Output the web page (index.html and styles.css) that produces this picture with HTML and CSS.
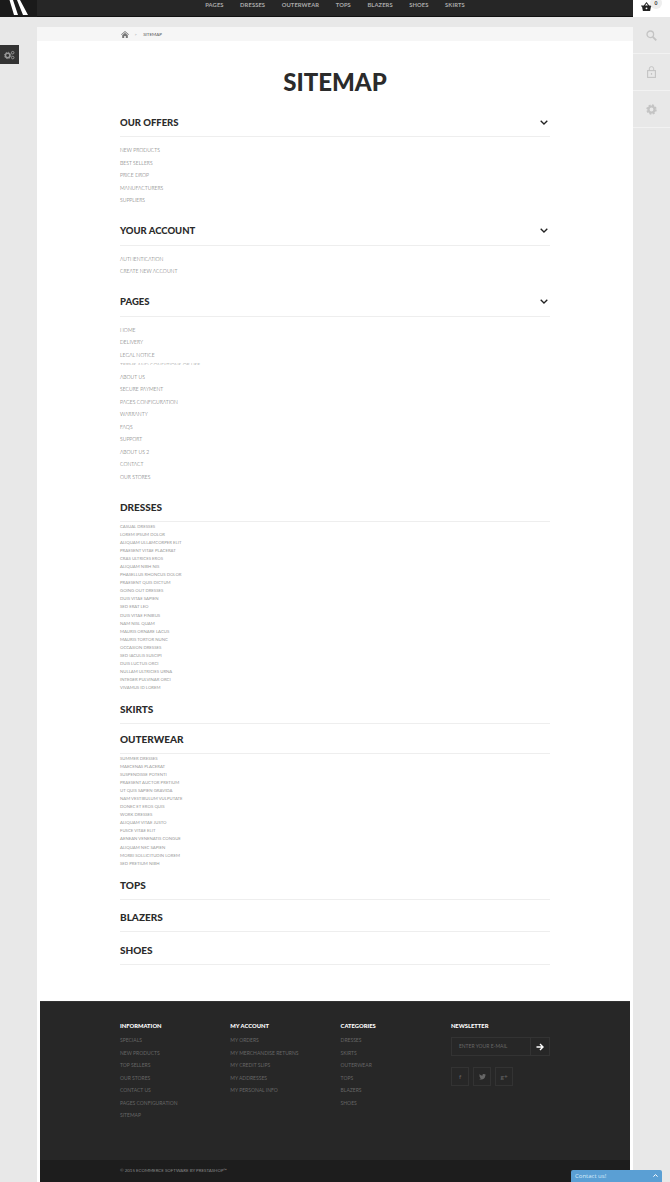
FILE: index.html
```html
<!DOCTYPE html>
<html>
  <head>
    <title>Sitemap</title>
    <link rel="stylesheet" href="styles.css">
  </head>
  <body>
    <div class="topbar">
      <a class="logo">
        <svg width="37" height="17" viewBox="0 0 37 17"><path d="M9.500 0H13l5 15h-4zM17 0h3l8 15h-5z" fill="#fff"/></svg>
      </a>
      <ul class="menu">
        <li>Pages</li>
        <li>Dresses</li>
        <li>Outerwear</li>
        <li>Tops</li>
        <li>Blazers</li>
        <li>Shoes</li>
        <li>Skirts</li>
      </ul>
      <div class="cart">
        <svg width="11" height="9" viewBox="0 0 12 10"><path d="M0 4h12v1h-1l-1 5H2L1 5H0zM3 4l3-4 3 4H7.600L6 1.800 4.400 4z" fill="#222"/><circle cx="6" cy="7" r="1" fill="#fff"/></svg>
        <span class="cart-count">0</span>
      </div>
    </div>

    <div class="layout">
      <div class="left-side">
        <div class="cogs">
          <svg width="11" height="10" viewBox="0 0 12 10" fill="none" stroke="#999"><circle cx="4" cy="5.500" r="2.400" stroke-width="1.600"/><circle cx="4" cy="5.500" r="3.500" stroke-width="1" stroke-dasharray="1.400 1.350"/><circle cx="9.500" cy="2.500" r="1.400"/><circle cx="9.500" cy="7.800" r="1.400"/></svg>
        </div>
      </div>

      <div class="main">
        <div class="breadcrumb">
          <svg width="8" height="7" viewBox="0 0 8 7"><path d="M4 0l4 3.600-.5.500L4 1 .5 4.100 0 3.600zM1.200 4.200L4 1.800l2.800 2.400V7H4.800V5H3.200v2h-2z" fill="#777"/></svg>
          <span class="sep">&gt;</span>
          <span>Sitemap</span>
        </div>

        <div class="content">
          <h1 class="page-title">Sitemap</h1>

          <div class="box">
            <h2 class="box-title">Our offers <svg class="chevron" viewBox="0 0 8 5"><path d="M.7.7L4 4 7.300.7" fill="none" stroke="#222" stroke-width="1.300"/></svg></h2>
            <ul class="links">
              <li>New products</li>
              <li>Best sellers</li>
              <li>Price drop</li>
              <li>Manufacturers</li>
              <li>Suppliers</li>
            </ul>
          </div>

          <div class="box">
            <h2 class="box-title">Your account <svg class="chevron" viewBox="0 0 8 5"><path d="M.7.7L4 4 7.300.7" fill="none" stroke="#222" stroke-width="1.300"/></svg></h2>
            <ul class="links">
              <li>Authentication</li>
              <li>Create new account</li>
            </ul>
          </div>

          <div class="box">
            <h2 class="box-title">Pages <svg class="chevron" viewBox="0 0 8 5"><path d="M.7.7L4 4 7.300.7" fill="none" stroke="#222" stroke-width="1.300"/></svg></h2>
            <ul class="links">
              <li>Home</li>
              <li>Delivery</li>
              <li>Legal notice</li>
              <li class="cut"><span>Terms and conditions of use</span></li>
              <li>About us</li>
              <li>Secure payment</li>
              <li>Pages configuration</li>
              <li>Warranty</li>
              <li>FAQs</li>
              <li>Support</li>
              <li>About us 2</li>
              <li>Contact</li>
              <li>Our stores</li>
            </ul>
          </div>

          <div class="category first">
            <h3 class="cat-title">Dresses</h3>
            <ul class="sublinks">
              <li>Casual Dresses</li>
              <li>Lorem ipsum dolor</li>
              <li>Aliquam ullamcorper elit</li>
              <li>Praesent vitae placerat</li>
              <li>Cras ultrices eros</li>
              <li>Aliquam nibh nis</li>
              <li>Phasellus rhoncus dolor</li>
              <li>Praesent quis dictum</li>
              <li>Going out Dresses</li>
              <li>Duis vitae sapien</li>
              <li>Sed erat leo</li>
              <li>Duis vitae finibus</li>
              <li>Nam nisl quam</li>
              <li>Mauris ornare lacus</li>
              <li>Mauris tortor nunc</li>
              <li>Occasion Dresses</li>
              <li>Sed iaculis suscipi</li>
              <li>Duis luctus orci</li>
              <li>Nullam ultricies urna</li>
              <li>Integer pulvinar orci</li>
              <li>Vivamus id lorem</li>
            </ul>
          </div>

          <div class="category">
            <h3 class="cat-title">Skirts</h3>
          </div>

          <div class="category">
            <h3 class="cat-title">Outerwear</h3>
            <ul class="sublinks">
              <li>Summer Dresses</li>
              <li>Maecenas placerat</li>
              <li>Suspendisse potenti</li>
              <li>Praesent auctor pretium</li>
              <li>Ut quis sapien gravida</li>
              <li>Nam vestibulum vulputate</li>
              <li>Donec et eros quis</li>
              <li>Work Dresses</li>
              <li>Aliquam vitae justo</li>
              <li>Fusce vitae elit</li>
              <li>Aenean venenatis congue</li>
              <li>Aliquam nec sapien</li>
              <li>Morbi sollicitudin lorem</li>
              <li>Sed pretium nibh</li>
            </ul>
          </div>

          <div class="category">
            <h3 class="cat-title">Tops</h3>
          </div>
          <div class="category spaced">
            <h3 class="cat-title">Blazers</h3>
          </div>
          <div class="category spaced">
            <h3 class="cat-title">Shoes</h3>
          </div>
        </div>

        <div class="footer">
          <div class="footer-cols">
            <div class="footer-col">
              <h4>Information</h4>
              <ul>
                <li>Specials</li>
                <li>New products</li>
                <li>Top sellers</li>
                <li>Our stores</li>
                <li>Contact us</li>
                <li>Pages configuration</li>
                <li>Sitemap</li>
              </ul>
            </div>
            <div class="footer-col">
              <h4>My account</h4>
              <ul>
                <li>My orders</li>
                <li>My merchandise returns</li>
                <li>My credit slips</li>
                <li>My addresses</li>
                <li>My personal info</li>
              </ul>
            </div>
            <div class="footer-col">
              <h4>Categories</h4>
              <ul>
                <li>Dresses</li>
                <li>Skirts</li>
                <li>Outerwear</li>
                <li>Tops</li>
                <li>Blazers</li>
                <li>Shoes</li>
              </ul>
            </div>
            <div class="footer-news">
              <h4>Newsletter</h4>
              <div class="news-form">
                <span class="news-input">Enter your e-mail</span>
                <span class="news-btn">
                  <svg width="8" height="8" viewBox="0 0 8 8"><path d="M.5 4h6M4 1l3 3-3 3" fill="none" stroke="#fff" stroke-width="1.400"/></svg>
                </span>
              </div>
              <div class="social">
                <span class="social-btn">f</span>
                <span class="social-btn">
                  <svg width="7" height="6" viewBox="0 0 7 6"><path d="M7 .8l-.8.2.6-.8-.8.4A1.400 1.400 0 0 0 3.500 1.800C2.300 1.700 1.300 1.200.6.300.2 1 .4 1.700 1 2.200L.4 2c0 .7.4 1.200 1.100 1.400H.9c.2.500.7.900 1.300.9C1.600 4.800.8 5 0 4.900 2.800 6.500 6.300 5 6.300 1.500z" fill="#666"/></svg>
                </span>
                <span class="social-btn">g+</span>
              </div>
            </div>
          </div>
          <div class="copyright">© 2015 Ecommerce software by PrestaShop™</div>
        </div>
      </div>

      <div class="right-side">
        <div class="side-btn">
          <svg width="11" height="11" viewBox="0 0 11 11" fill="none" stroke="#c4c4c4"><circle cx="4.300" cy="4.300" r="3.300" stroke-width="1.300"/><path d="M6.800 6.800L10.300 10.300" stroke-width="1.900"/></svg>
        </div>
        <div class="side-btn">
          <svg width="9" height="12" viewBox="0 0 9 12" fill="none" stroke="#c4c4c4"><rect x=".6" y="4.600" width="7.800" height="6.800" stroke-width="1.100"/><path d="M2.300 4.500V2.800a2.200 2.200 0 0 1 4.400 0v1.700"/><rect x="3.900" y="7" width="1.200" height="1.800" fill="#c4c4c4" stroke="none"/></svg>
        </div>
        <div class="side-btn">
          <svg width="11" height="11" viewBox="0 0 11 11" fill="none" stroke="#c4c4c4"><circle cx="5.500" cy="5.500" r="3" stroke-width="2.200"/><circle cx="5.500" cy="5.500" r="4.300" stroke-width="1.800" stroke-dasharray="1.900 1.480"/></svg>
        </div>
      </div>
    </div>

    <div class="contact-tab">
      <span>Contact us!</span>
      <svg width="5" height="3" viewBox="0 0 5 3"><path d="M.4 2.600L2.500.6l2.100 2" fill="none" stroke="#fff"/></svg>
    </div>
  </body>
</html>
```

FILE: styles.css
```css
body {
  font-family: Lato, "Open Sans", sans-serif;
  margin: 0;
  padding: 0;
  background-color: #e8e8e8;
  height: 1182px;
  overflow: hidden;
  position: relative;
}

ul {
  list-style: none;
  margin: 0;
  padding: 0;
}

.topbar {
  display: flex;
  height: 17px;
  background-color: #262626;
  box-sizing: border-box;
  border-bottom: 1px solid #111;
}

.logo {
  display: block;
  width: 37px;
  height: 17px;
  background-color: #1a1a1a;
  overflow: hidden;
}

.menu {
  flex: 1;
  display: flex;
  justify-content: center;
  gap: 16.500px;
  font-size: 5.800px;
  line-height: 9px;
  color: #aaa;
  text-transform: uppercase;
  letter-spacing: 0.1px;
  font-weight: 700;
}

.cart {
  width: 37px;
  height: 17px;
  background-color: #fff;
  display: flex;
  box-sizing: border-box;
  padding: 2px 0 0 8px;
  position: relative;
}

.cart-count {
  position: absolute;
  right: 8px;
  top: -3px;
  width: 12px;
  height: 12px;
  border-radius: 50%;
  background-color: #eee;
  text-align: center;
  font-size: 5px;
  line-height: 13px;
  font-weight: 700;
  color: #333;
}

.layout {
  display: flex;
  align-items: flex-start;
}

.left-side {
  width: 37px;
  padding-top: 28px;
}

.cogs {
  width: 19px;
  height: 19px;
  background-color: #333;
  display: flex;
  align-items: center;
  justify-content: center;
}

.main {
  width: 596px;
  margin-top: 10px;
  background-color: #fff;
  height: 1155px;
  display: flex;
  flex-direction: column;
}

.breadcrumb {
  height: 14px;
  background-color: #f6f6f6;
  display: flex;
  align-items: center;
  padding-left: 83.500px;
  font-size: 4.500px;
  text-transform: uppercase;
  color: #555;
}

.sep {
  margin: 0 6px 0 6px;
  color: #aaa;
}

.content {
  padding: 0 83px;
}

.page-title {
  margin: 27px 0 0;
  text-align: center;
  font-size: 24px;
  line-height: 28px;
  font-weight: 900;
  color: #2b2b2b;
  text-transform: uppercase;
}

.box {
  margin-bottom: 10px;
}

.page-title + .box {
  margin-top: 12px;
}

.box-title {
  display: flex;
  justify-content: space-between;
  align-items: center;
  margin: 0 0 7px;
  height: 29px;
  box-sizing: border-box;
  border-bottom: 1px solid #eee;
  font-size: 9.500px;
  font-weight: 900;
  color: #2b2b2b;
  text-transform: uppercase;
}

.chevron {
  width: 8px;
  height: 5px;
  margin-right: 2px;
}

.links {
  font-size: 5.100px;
  line-height: 12.500px;
  font-weight: 300;
  color: #555;
  text-transform: uppercase;
}

.links .cut {
  height: 9.500px;
  overflow: hidden;
  color: #888;
}

.cut span {
  display: block;
  height: 2.500px;
  margin-top: 1px;
  line-height: 7px;
  overflow: hidden;
}

.category {
  padding-top: 5px;
}

.category.first {
  padding-top: 4px;
}

.category.spaced {
  padding-top: 7.500px;
}

.cat-title {
  margin: 0;
  height: 25px;
  box-sizing: border-box;
  border-bottom: 1px solid #eee;
  font-size: 10px;
  line-height: 21px;
  font-weight: 900;
  color: #2b2b2b;
  text-transform: uppercase;
}

.sublinks {
  font-size: 4.300px;
  line-height: 8.050px;
  color: #999;
  text-transform: uppercase;
  margin-top: 1px;
  padding-bottom: 2px;
}

.footer {
  margin: auto 3px 0;
  height: 181px;
  background-color: #272727;
  border-top: 1px solid #333;
  box-sizing: border-box;
  display: flex;
  flex-direction: column;
  justify-content: space-between;
}

.footer-cols {
  display: flex;
  padding: 20px 0 0 80px;
  color: #666;
}

.footer-col {
  width: 110.300px;
}

.footer h4 {
  margin: 0 0 4px;
  font-size: 5.800px;
  line-height: 8px;
  font-weight: 900;
  color: #fff;
  text-transform: uppercase;
}

.footer li {
  font-size: 5px;
  line-height: 12.500px;
  text-transform: uppercase;
}

.footer-news {
  width: 99px;
}

.news-form {
  display: flex;
  height: 19px;
  margin-top: 7px;
  border: 1px solid #333;
  box-sizing: border-box;
}

.news-input {
  flex: 1;
  padding-left: 7px;
  font-size: 5px;
  line-height: 17px;
  color: #666;
  text-transform: uppercase;
}

.news-btn {
  width: 18px;
  border-left: 1px solid #333;
  display: flex;
  align-items: center;
  justify-content: center;
}

.social {
  display: flex;
  gap: 3.500px;
  margin-top: 11px;
}

.social-btn {
  width: 18.500px;
  height: 19px;
  box-sizing: border-box;
  border: 1px solid #333;
  display: flex;
  align-items: center;
  justify-content: center;
  font-size: 6.500px;
  color: #666;
}

.copyright {
  height: 22px;
  background-color: #1d1d1d;
  padding-left: 80px;
  font-size: 4.400px;
  line-height: 21px;
  color: #888;
  text-transform: uppercase;
}

.right-side {
  width: 37px;
}

.side-btn {
  height: 37px;
  box-sizing: border-box;
  border-bottom: 1px solid #f2f2f2;
  display: flex;
  align-items: center;
  justify-content: center;
}

.contact-tab {
  position: absolute;
  right: 8px;
  bottom: 0;
  width: 91px;
  height: 12.500px;
  box-sizing: border-box;
  padding: 0 4px;
  background-color: #5a9fd4;
  border-radius: 2px 2px 0 0;
  display: flex;
  align-items: center;
  justify-content: space-between;
  font-family: "Open Sans", sans-serif;
  font-size: 6px;
  color: #d8ecfa;
}
```
